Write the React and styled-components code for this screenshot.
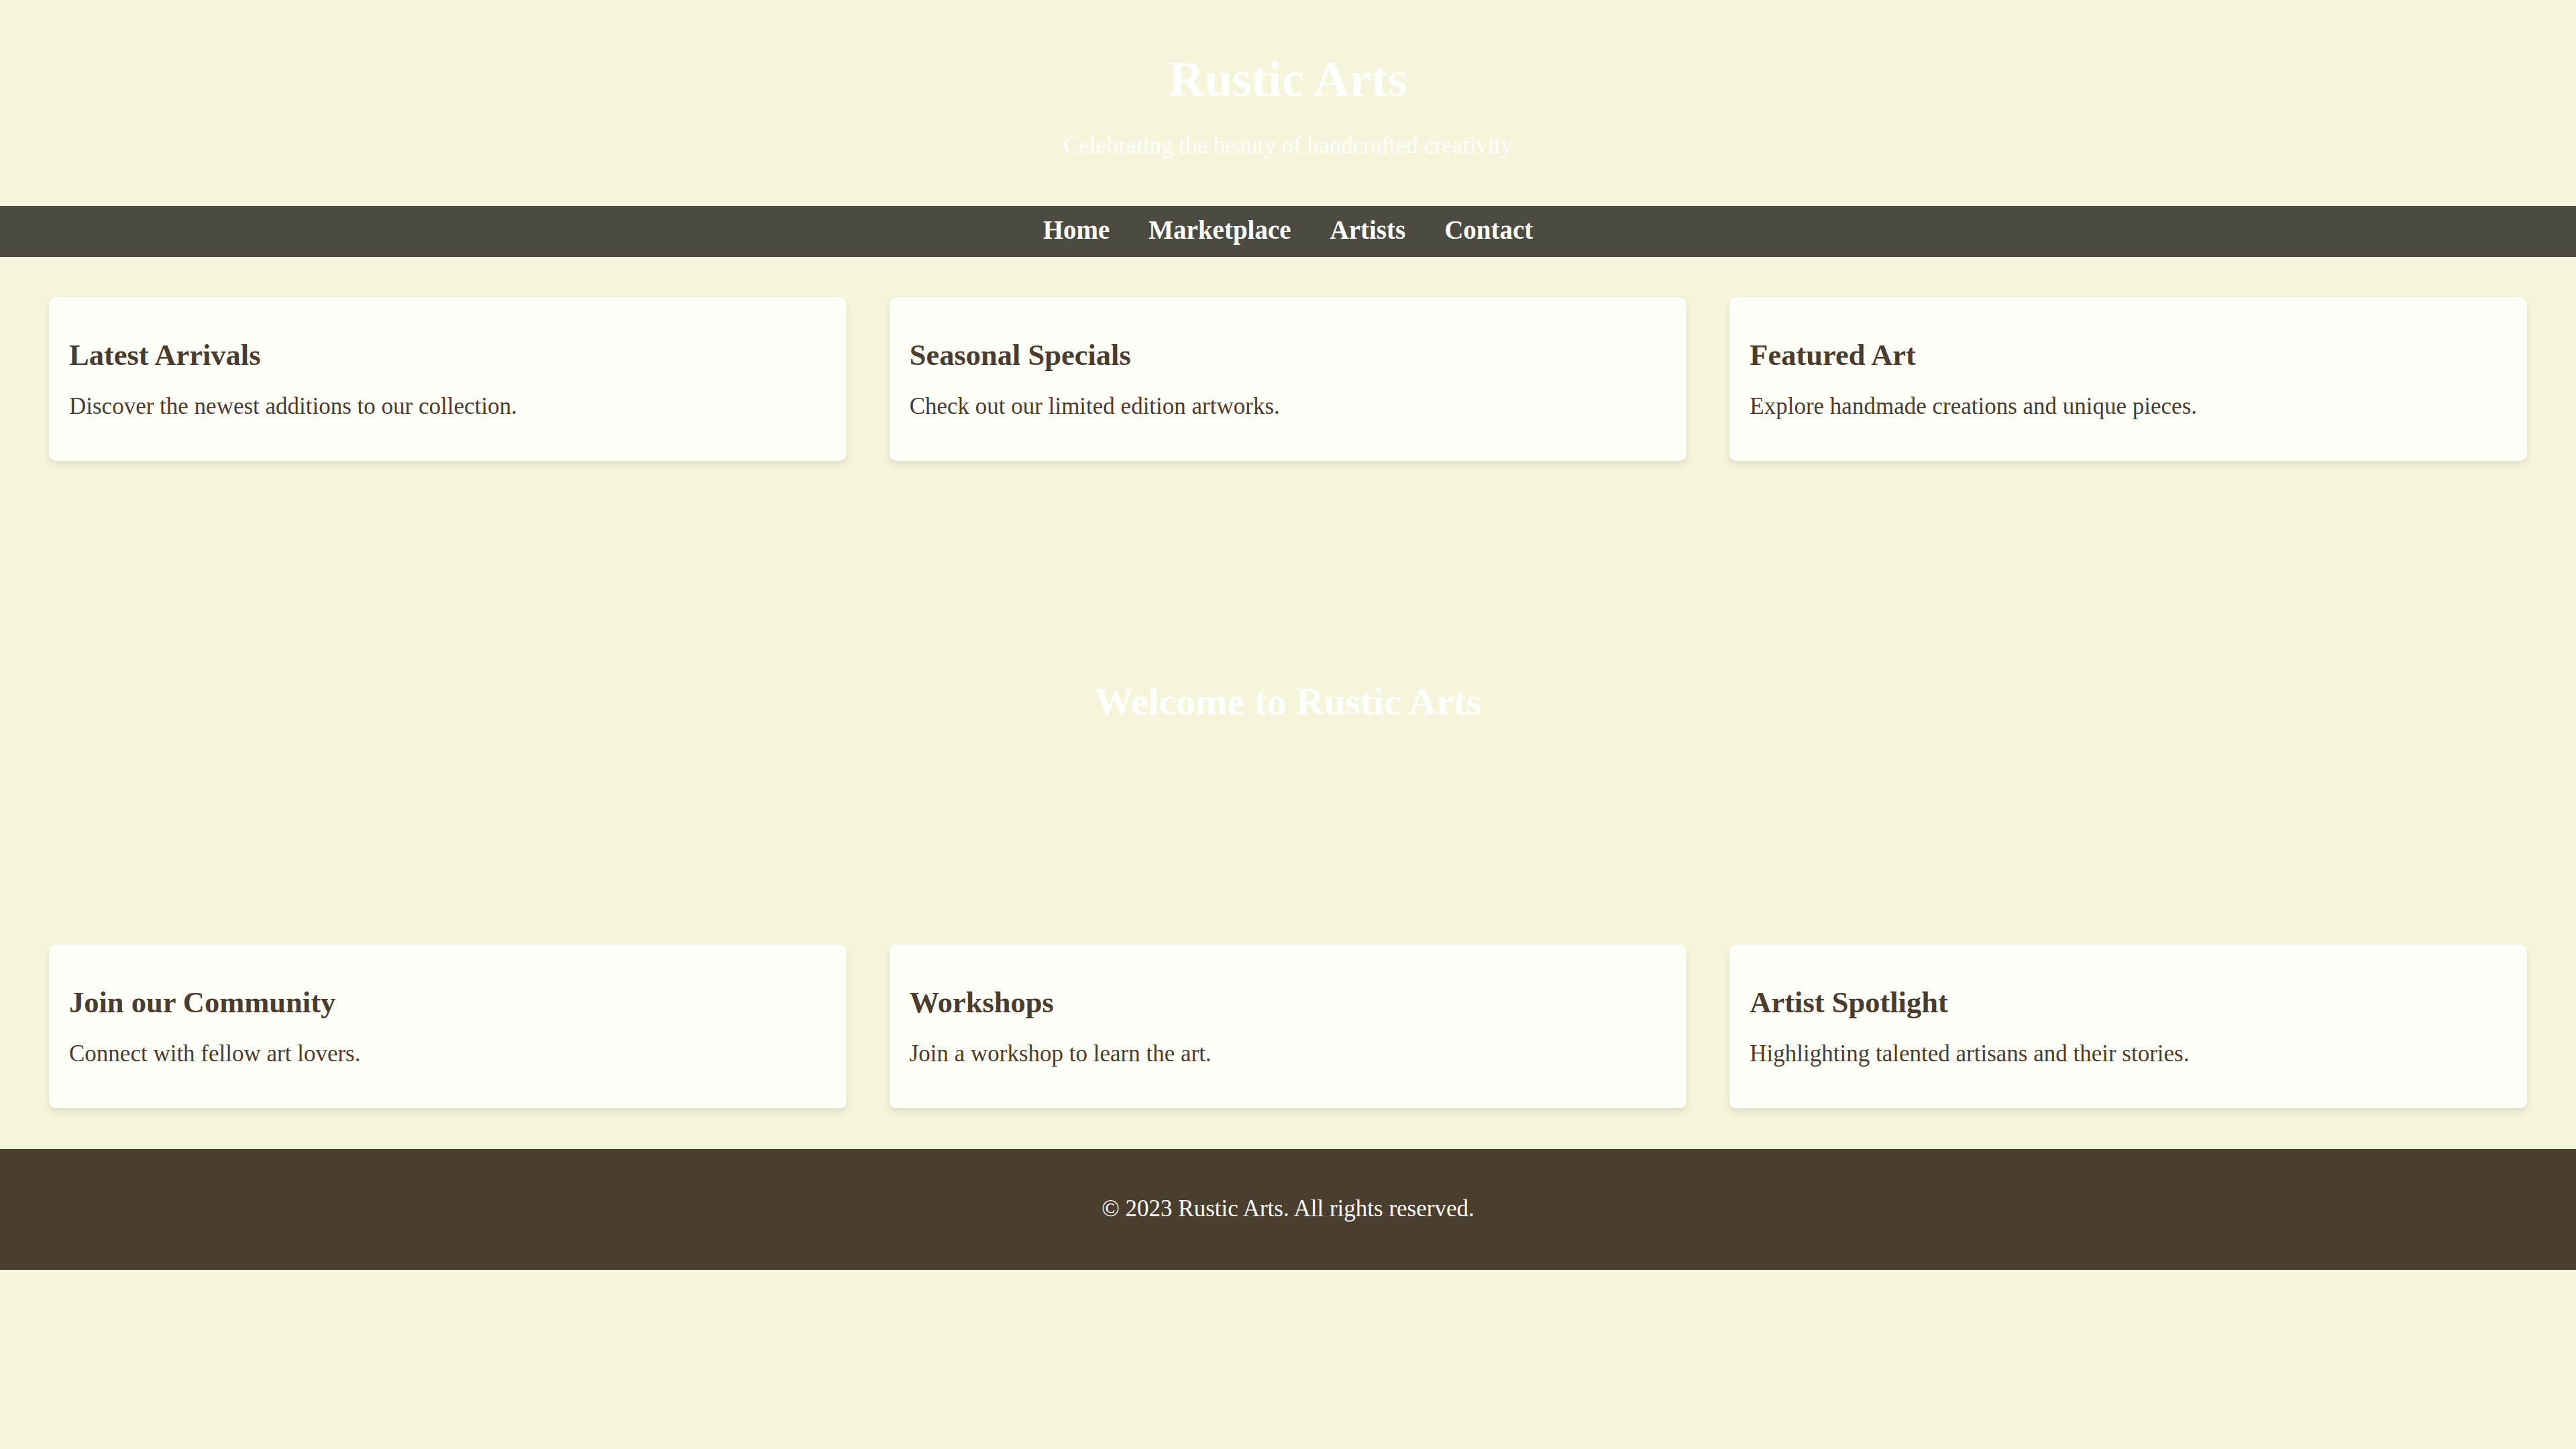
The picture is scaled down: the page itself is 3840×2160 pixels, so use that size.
import React from "react";
import styled, { createGlobalStyle } from "styled-components";

const GlobalStyle = createGlobalStyle`
    html, body {
        margin: 0;
        padding: 0;
        background: #f5f5dc;
        font-family: "Liberation Serif", "Times New Roman", serif;
        color: #4a3c2e;
    }
`

const SHeader = styled.header`
    text-align: center;
    padding: 74px 0 69px;
    color: #fff;
`

const STitle = styled.h1`
    margin: 0 0 33px;
    font-size: 74px;
    line-height: 1.2;
    font-weight: 700;
`

const SSubtitle = styled.p`
    margin: 0;
    font-size: 35px;
    line-height: 1.2;
`

const SNav = styled.nav`
    display: flex;
    justify-content: center;
    gap: 58px;
    background: #4b4b42;
    padding: 13.5px 0 15.7px;
`

const SNavLink = styled.a`
    color: #fff;
    font-size: 39px;
    line-height: 1.2;
    font-weight: 700;
    text-decoration: none;
`

const SMain = styled.main`
    padding: 60px 73px 60.6px;
`

const SGrid = styled.section`
    display: grid;
    grid-template-columns: repeat(3, 1fr);
    gap: 64px;
`

const SCard = styled.div`
    background: #fefef8;
    border-radius: 10px;
    padding: 60px 30px;
    box-shadow: 0 5px 12px rgba(0, 0, 0, 0.1);
`

const SCardTitle = styled.h3`
    margin: 0 0 29px;
    font-size: 44.5px;
    line-height: 1.2;
    font-weight: 700;
`

const SCardText = styled.p`
    margin: 0;
    font-size: 35px;
    line-height: 1.2;
`

const SHero = styled.section`
    text-align: center;
    padding: 324px 0 327.8px;
`

const SHeroTitle = styled.h2`
    margin: 0;
    color: #fff;
    font-size: 57.5px;
    line-height: 1.2;
    font-weight: 700;
`

const SFooter = styled.footer`
    background: #4a3e2f;
    color: #fff;
    text-align: center;
    padding: 68px 0 70px;
    font-size: 35px;
    line-height: 1.2;
`

const topCards = [
    { title: "Latest Arrivals", text: "Discover the newest additions to our collection." },
    { title: "Seasonal Specials", text: "Check out our limited edition artworks." },
    { title: "Featured Art", text: "Explore handmade creations and unique pieces." },
]

const bottomCards = [
    { title: "Join our Community", text: "Connect with fellow art lovers." },
    { title: "Workshops", text: "Join a workshop to learn the art." },
    { title: "Artist Spotlight", text: "Highlighting talented artisans and their stories." },
]

function CardRow({ cards }) {
    return (
        <SGrid>
            {cards.map((c) => (
                <SCard key={c.title}>
                    <SCardTitle>{c.title}</SCardTitle>
                    <SCardText>{c.text}</SCardText>
                </SCard>
            ))}
        </SGrid>
    )
}

export default function App() {
    return (
        <>
            <GlobalStyle />
            <SHeader>
                <STitle>Rustic Arts</STitle>
                <SSubtitle>Celebrating the beauty of handcrafted creativity</SSubtitle>
            </SHeader>
            <SNav>
                {["Home", "Marketplace", "Artists", "Contact"].map((item) => (
                    <SNavLink key={item} href="#">{item}</SNavLink>
                ))}
            </SNav>
            <SMain>
                <CardRow cards={topCards} />
                <SHero>
                    <SHeroTitle>Welcome to Rustic Arts</SHeroTitle>
                </SHero>
                <CardRow cards={bottomCards} />
            </SMain>
            <SFooter>© 2023 Rustic Arts. All rights reserved.</SFooter>
        </>
    )
}
